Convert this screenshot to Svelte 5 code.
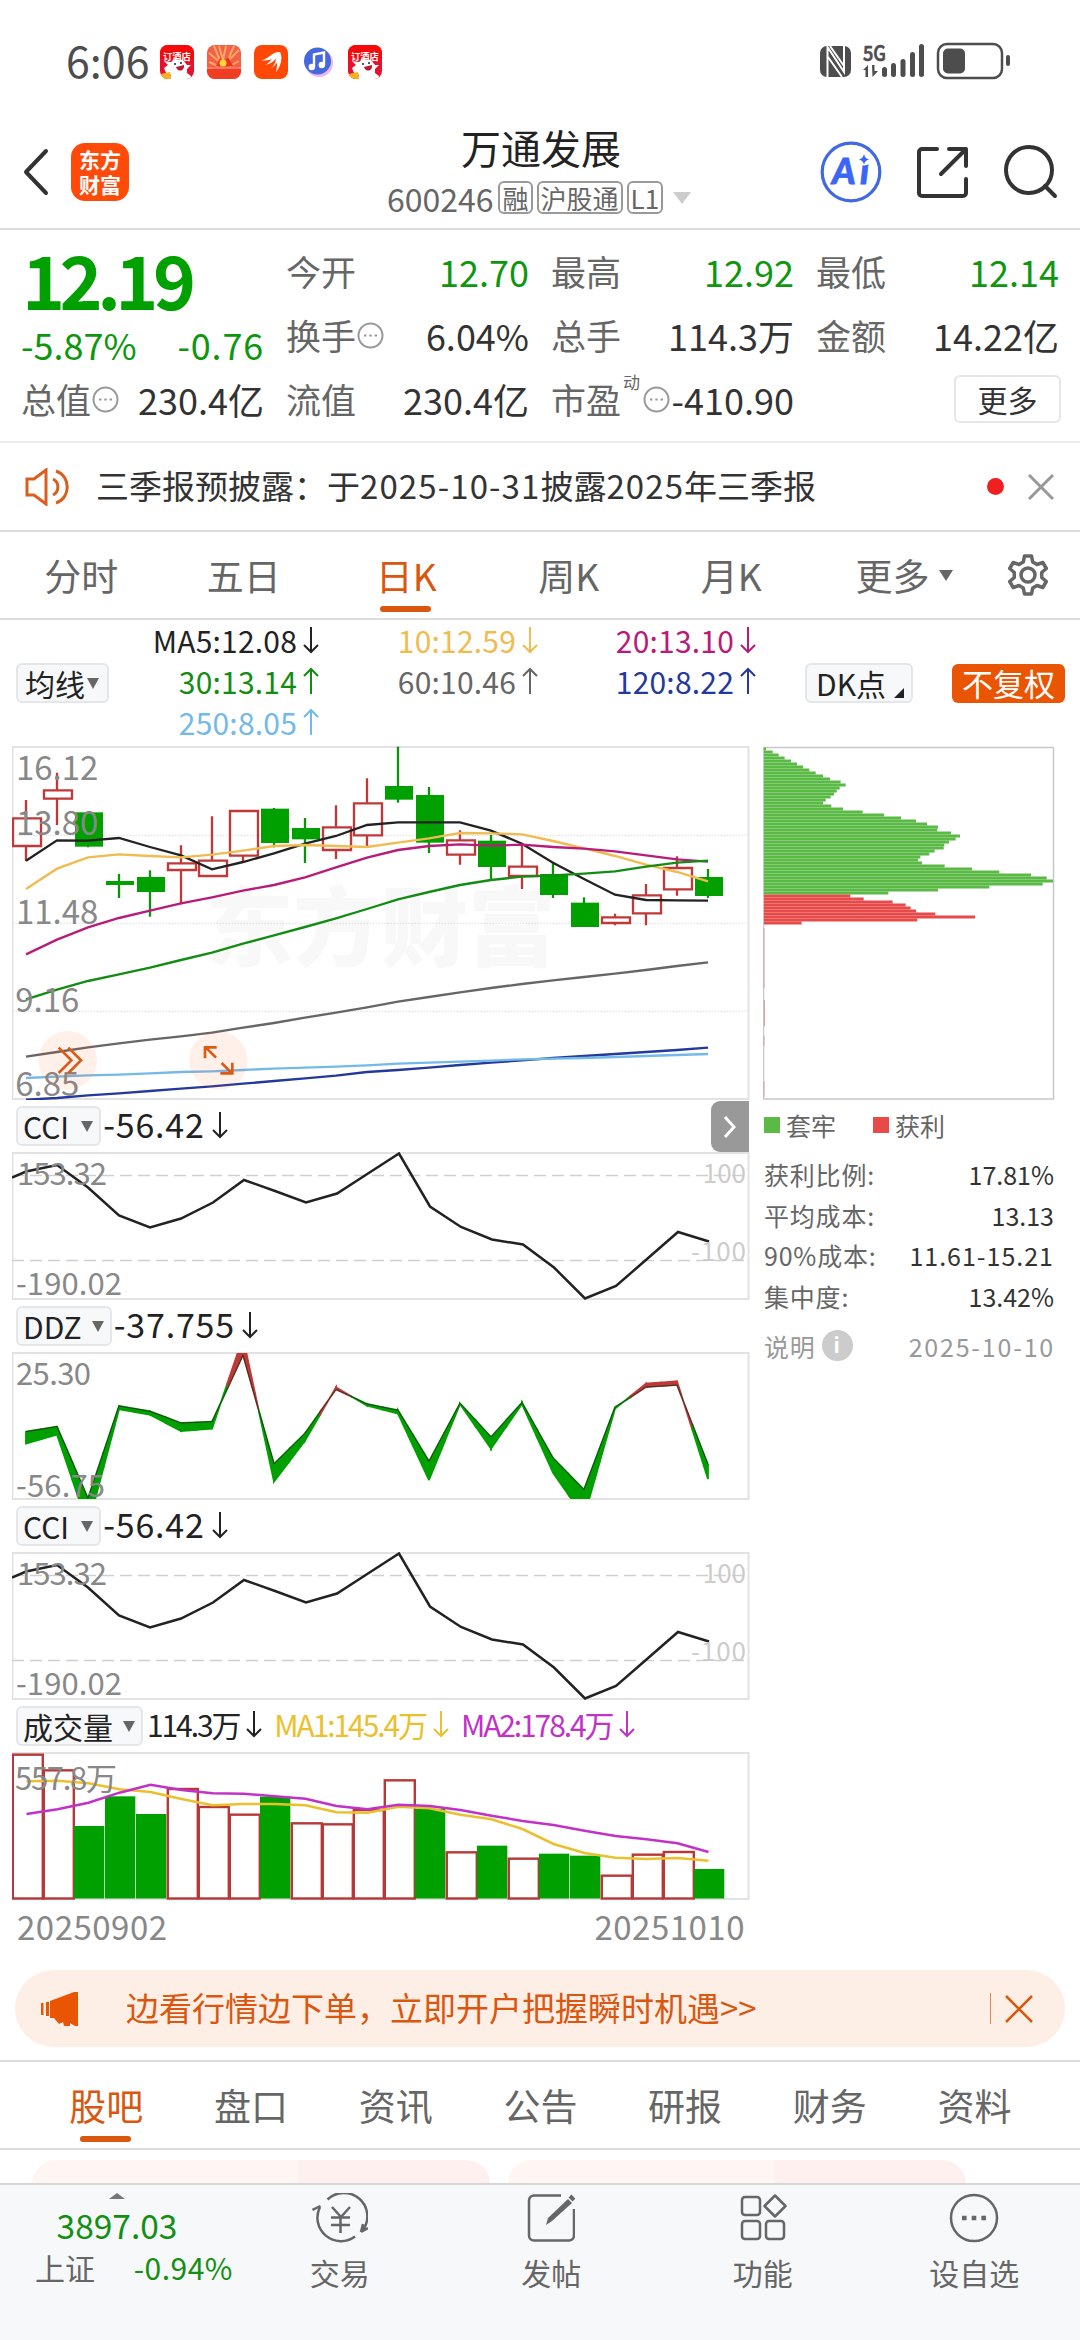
<script lang="ts">
	type Quote = { label: string; value: string; tone?: string; info?: boolean; sup?: string };

	// Header quote grid, one array per column
	const columns: Quote[][] = [
		[
			{ label: '今开', value: '12.70', tone: 'down' },
			{ label: '换手', value: '6.04%', info: true },
			{ label: '流值', value: '230.4亿' }
		],
		[
			{ label: '最高', value: '12.92', tone: 'down' },
			{ label: '总手', value: '114.3万' },
			{ label: '市盈', value: '-410.90', info: true, sup: '动' }
		],
		[
			{ label: '最低', value: '12.14', tone: 'down' },
			{ label: '金额', value: '14.22亿' }
		]
	];

	const periods = ['分时', '五日', '日K', '周K', '月K'];

	const averages = [
		{ text: 'MA5:12.08', dir: 'down', color: '#222' },
		{ text: '10:12.59', dir: 'down', color: '#f0bb50' },
		{ text: '20:13.10', dir: 'down', color: '#b81c78' },
		{ text: '30:13.14', dir: 'up', color: '#148c14' },
		{ text: '60:10.46', dir: 'up', color: '#666' },
		{ text: '120:8.22', dir: 'up', color: '#24399b' },
		{ text: '250:8.05', dir: 'up', color: '#74b9e8' }
	];

	// Candles: [up, high, bodyTop, bodyBottom, low], in thirds of a pixel
	const candles: [number, number, number, number, number][] = [
		[1, 210, 263, 348, 393],
		[1, 128, 179, 206, 285],
		[0, 247, 247, 350, 352],
		[0, 432, 453, 465, 504],
		[0, 421, 441, 486, 560],
		[1, 346, 398, 420, 523],
		[1, 259, 390, 438, 438],
		[1, 241, 241, 377, 398],
		[0, 234, 236, 339, 352],
		[0, 264, 294, 328, 399],
		[1, 226, 290, 360, 387],
		[1, 145, 218, 316, 348],
		[0, 50, 168, 209, 218],
		[0, 171, 195, 338, 369],
		[1, 301, 329, 374, 404],
		[0, 315, 332, 411, 450],
		[1, 345, 408, 438, 477],
		[0, 397, 432, 495, 504],
		[0, 502, 518, 591, 591],
		[1, 551, 560, 579, 586],
		[1, 462, 494, 550, 586],
		[1, 379, 412, 478, 497],
		[0, 417, 441, 498, 504]
	];

	const maLines = [
		{ color: '#666', ys: [980, 966, 952, 940, 929, 919, 908, 893, 879, 863, 848, 832, 815, 801, 787, 774, 762, 751, 741, 731, 720, 708, 697] },
		{ color: '#24399b', ys: [1109, 1104, 1096, 1090, 1083, 1076, 1069, 1061, 1053, 1045, 1037, 1026, 1020, 1013, 1005, 998, 991, 984, 978, 972, 966, 960, 953] },
		{ color: '#74b9e8', ys: [1044, 1040, 1036, 1034, 1030, 1026, 1024, 1020, 1016, 1013, 1010, 1006, 1001, 998, 995, 992, 988, 986, 984, 981, 978, 975, 972] },
		{ color: '#222', ys: [392, 331, 332, 324, 351, 376, 418, 396, 370, 341, 318, 285, 277, 277, 277, 302, 341, 398, 447, 494, 510, 511, 512] },
		{ color: '#f0bb50', ys: [477, 416, 382, 373, 378, 382, 374, 362, 348, 345, 348, 351, 338, 325, 309, 310, 313, 333, 355, 378, 404, 426, 454] },
		{ color: '#b81c78', ys: [673, 629, 592, 564, 542, 520, 502, 482, 465, 442, 412, 383, 360, 348, 343, 347, 344, 351, 356, 364, 376, 388, 395] },
		{ color: '#148c14', ys: [808, 779, 753, 733, 713, 690, 668, 641, 616, 591, 565, 537, 508, 486, 465, 450, 440, 436, 431, 424, 410, 398, 392] }
	];

	const cci = [19.5, 13, 35.5, 63.5, 75.5, 66.5, 50.5, 28, 39, 50.5, 41.5, 21.5, 1.5, 54.5, 75, 87.5, 92.5, 115.5, 146.5, 134, 107, 80, 89.5];

	// DDZ: [line, band edge], the band is red where its edge is above the line
	const ddz: [number, number][] = [
		[995, 1031], [980, 1004], [1195, 1278], [918, 928], [934, 944], [969, 993], [965, 986], [765, 712],
		[1092, 1145], [1000, 1022], [868, 862], [912, 917], [931, 941], [1084, 1140], [910, 912], [1011, 1046],
		[908, 912], [1074, 1118], [1169, 1251], [922, 926], [861, 851], [855, 844], [1094, 1137]
	];

	// Volume bars: [up, top]
	const volumes: [number, number][] = [
		[1, 731], [1, 778], [0, 948], [0, 859], [0, 912], [1, 834], [1, 888], [1, 911], [0, 860], [1, 937], [1, 940], [1, 897],
		[1, 808], [0, 897], [1, 1024], [0, 1007], [1, 1043], [0, 1031], [0, 1037], [1, 1094], [1, 1031], [1, 1023], [0, 1077]
	];
	const volMa = [
		{ color: '#eac12c', ys: [814, 812, 820, 838, 846, 867, 886, 882, 882, 886, 907, 908, 890, 895, 914, 928, 957, 1002, 1029, 1043, 1047, 1044, 1052] },
		{ color: '#c032c8', ys: [912, 898, 878, 848, 824, 840, 850, 851, 859, 866, 888, 898, 884, 888, 900, 917, 933, 945, 962, 978, 988, 1000, 1026] }
	];

	const trapped = [
		78, 98, 116, 134, 153, 171, 189, 208, 227, 249, 270, 302, 317, 299, 290, 282, 272, 257, 249, 274, 309, 368, 432, 483, 528,
		561, 594, 592, 633, 660, 647, 627, 613, 611, 584, 568, 541, 534, 546, 614, 696, 778, 873, 920, 939, 908, 748, 594, 445
	];
	const profit = [331, 371, 458, 497, 512, 528, 586, 705, 532, 185];

	const stats = [
		['获利比例:', '17.81%'],
		['平均成本:', '13.13'],
		['90%成本:', '11.61-15.21'],
		['集中度:', '13.42%']
	];

	const sections = ['股吧', '盘口', '资讯', '公告', '研报', '财务', '资料'];

	const px = (i: number) => 14 + 31 * i;
	const volY = (y: number) => y / 3 - 242;
	const ddzY = (y: number) => y / 3 - 252;

	const priceLine = (ys: number[]) => ys.map((y, i) => `${78 + 93 * i},${y}`).join(' ');
	const volLine = (ys: number[]) => ys.map((y, i) => `${px(i) + 0.5},${volY(y)}`).join(' ');
	const cciLine = `0,25.5 ` + cci.map((y, i) => `${px(i) + (i > 5 ? 1 : 0)},${y}`).join(' ');
	const ddzLine = ddz.map(([y], i) => `${px(i)},${ddzY(y)}`).join(' ');

	// Each segment is split in the middle so that both halves take the colour of their own day
	const ddzBands = ddz.slice(1).flatMap(([y1, e1], k) => {
		const [y0, e0] = ddz[k];
		const x0 = px(k);
		const x1 = px(k + 1);
		const xm = (x0 + x1) / 2;
		const m = ddzY((y0 + y1) / 2);
		const em = ddzY((e0 + e1) / 2);
		return [
			{ up: e0 < y0, points: `${x0},${ddzY(y0)} ${xm},${m} ${xm},${em} ${x0},${ddzY(e0)}` },
			{ up: e1 < y1, points: `${xm},${m} ${x1},${ddzY(y1)} ${x1},${ddzY(e1)} ${xm},${em}` }
		];
	});
</script>

{#snippet arrow(dir: string)}
	<svg class="arrow" width="18" height="28" viewBox="0 0 18 28">
		<path d={dir === 'up' ? 'M9 27V2M2 9l7-7 7 7' : 'M9 1v25M2 19l7 7 7-7'} />
	</svg>
{/snippet}

{#snippet info()}
	<svg class="info" width="27" height="27" viewBox="0 0 27 27">
		<circle cx="13.5" cy="13.5" r="12" />
		<path d="M7 13.5h2.4M12.3 13.5h2.4M17.6 13.5h2.4" />
	</svg>
{/snippet}

{#snippet dogIcon()}
	<svg width="34" height="34" viewBox="0 0 34 34">
		<defs><clipPath id="dog"><rect width="34" height="34" rx="8" /></clipPath></defs>
		<g clip-path="url(#dog)">
			<rect width="34" height="34" fill="#e8102a" />
			<rect width="34" height="14" fill="#f80808" />
			<text x="3" y="14.5" font-size="9.3" font-weight="700" fill="#fff">订酒店</text>
			<path d="M4 16l7 1 4-3 8 1 4 5 4 0-4 4v4l4 3v4H9l2-5-5-2-2-5 4-3z" fill="#fff" />
			<path d="M16 22l8-2c1 6-6 8-8 2z" fill="#c01830" />
			<circle cx="15" cy="19" r="1" fill="#222" />
			<circle cx="21" cy="18" r="1" fill="#222" />
			<path d="M1 29l9-2 1 7H2z" fill="#f8b020" />
		</g>
	</svg>
{/snippet}

{#snippet cciPanel()}
	<div class="indicator-head">
		<button class="chip">CCI <i class="caret"></i></button>
		<span>-56.42</span>{@render arrow('down')}
	</div>
	<svg class="panel" width="738" height="148" viewBox="0 0 738 148">
		<rect class="frame" x="0.5" y="1" width="736" height="146" />
		<path class="dashed" d="M0 23.5H736M0 108.5H736" />
		<polyline class="line" points={cciLine} />
		<text class="axis" x="5" y="33" textLength="90">153.32</text>
		<text class="axis" x="4" y="143" textLength="106">-190.02</text>
		<text class="limit" x="734" y="30.5" text-anchor="end">100</text>
		<text class="limit" x="679" y="108.5" textLength="55">-100</text>
	</svg>
{/snippet}

<main class="screen">
	<div class="status">
		<span class="time">6:06</span>
		<div class="apps">
			{@render dogIcon()}
			<svg width="34" height="34" viewBox="0 0 34 34">
				<rect width="34" height="34" rx="8" fill="#f4604a" />
				<path d="M2 8l12 10L7 1M12 1l4 14 3-14M32 5L20 17 27 1M2 17l9 4M32 16l-9 5" stroke="#fba860" stroke-width="2" fill="none" />
				<path d="M9 21l4-8 4 4 4-5 5 9z" fill="#f23020" />
				<circle cx="16" cy="18" r="3.5" fill="#ffd838" />
				<path d="M0 22h34v4a8 8 0 0 1-8 8H8a8 8 0 0 1-8-8z" fill="#f03c20" />
				<path d="M0 22h34v2H0z" fill="#fa7a60" />
			</svg>
			<svg width="34" height="34" viewBox="0 0 34 34">
				<rect width="34" height="34" rx="8" fill="#ff4806" />
				<path d="M7 15.500C15 14 17 7 26 7c-4 2-4 9-19 8.500zM11 20C18 17 19 9 26 7c-2 5-7 12-15 13zM17 23c6-4 4-12 9-16 1 5-3 13-9 16zM22 27c2-7 0-14 4-20 3 6 1 14-4 20z" fill="#fff" />
			</svg>
			<svg width="34" height="34" viewBox="0 0 34 34">
				<circle cx="18" cy="18" r="14" fill="#e6b8f4" />
				<circle cx="16.500" cy="16" r="13.500" fill="#4668dc" />
				<path d="M13 22V9.500l10-2V20" fill="none" stroke="#fff" stroke-width="2.400" />
				<circle cx="10.800" cy="22" r="3.200" fill="#fff" />
				<circle cx="20.800" cy="20" r="3.200" fill="#fff" />
			</svg>
			{@render dogIcon()}
		</div>
		<svg class="signals" width="192" height="38" viewBox="0 0 192 38" fill="#4d4d4d">
			<rect y="4" width="31" height="31" rx="7" />
			<path d="M7.500 35V5L24 30V4" fill="none" stroke="#fff" stroke-width="2" />
			<path d="M10 4L24 24M8 15l14 20" fill="none" stroke="#fff" stroke-width="2" />
			<text x="43" y="18.500" font-size="21" font-weight="500" stroke="#4d4d4d" stroke-width="0.700" textLength="23" lengthAdjust="spacingAndGlyphs">5G</text>
			<path d="M43 28l5-5v12h-2.500v-7zM52 23h2.500v6l3.500 0-5.500 6z" />
			<rect x="62" y="25" width="5" height="10" rx="2.500" />
			<rect x="71" y="21" width="5" height="14" rx="2.500" />
			<rect x="80.500" y="17" width="5" height="18" rx="2.500" />
			<rect x="90" y="10" width="5" height="25" rx="2.500" />
			<rect x="99" y="2" width="5" height="33" rx="2.500" />
			<rect x="118" y="2" width="64" height="34" rx="9" fill="none" stroke="#4d4d4d" stroke-width="2.500" />
			<rect x="123" y="6.500" width="22" height="25" rx="5" />
			<rect x="186" y="13" width="4" height="11" rx="2" />
		</svg>
	</div>

	<header class="header">
		<svg class="back" width="30" height="50" viewBox="0 0 30 50"><path d="M25 4L5 25l20 21" /></svg>
		<div class="logo"><span>东方</span><span>财富</span></div>
		<div class="title">
			<h1>万通发展</h1>
			<div class="code">
				<span class="number">600246</span>
				<span class="badge">融</span>
				<span class="badge">沪股通</span>
				<span class="badge">L1</span>
				<i class="caret pale"></i>
			</div>
		</div>
		<div class="tools">
			<svg width="62" height="62" viewBox="0 0 62 62">
				<circle cx="31" cy="31" r="28.800" fill="none" stroke="#4169e1" stroke-width="3.200" />
				<text class="ai" x="12" y="43" textLength="37">Ai</text>
				<circle cx="44" cy="17.500" r="7" fill="#fff" />
				<path d="M44 13c1 3.500 2 4.500 5 5.500-3 1-4 2-5 5-1-3-2-4-5-5 3-1 4-2 5-5.500z" fill="#3b66f5" />
			</svg>
			<svg class="stroke-icon" width="52" height="52" viewBox="0 0 52 52">
				<path d="M20 3H5a3 3 0 0 0-3 3v41a3 3 0 0 0 3 3h41a3 3 0 0 0 3-3V33M32 3h17v17M48 4L24 28" />
			</svg>
			<svg class="stroke-icon" width="54" height="54" viewBox="0 0 54 54">
				<circle cx="25" cy="25" r="23" />
				<path d="M41 41l10 10" />
			</svg>
		</div>
	</header>

	<section class="quote">
		<div class="quote-main">
			<strong>12.19</strong>
			<div class="pair down"><span>-5.87%</span><span class="change">-0.76</span></div>
			<div class="pair">
				<span class="label">总值{@render info()}</span>
				<span>230.4亿</span>
			</div>
		</div>
		{#each columns as column}
			<div class="quote-col">
				{#each column as item}
					<div class="pair">
						<span class="label">
							{item.label}{#if item.sup}<sup>{item.sup}</sup>{/if}{#if item.info}{@render info()}{/if}
						</span>
						<span class={item.tone}>{item.value}</span>
					</div>
				{/each}
				{#if column.length < 3}
					<div class="pair end"><button class="more">更多</button></div>
				{/if}
			</div>
		{/each}
	</section>

	<section class="notice">
		<svg width="46" height="38" viewBox="0 0 46 38">
			<path d="M2 11h7l12-9v34l-12-9H2zM28 11a9 9 0 0 1 0 16M31 3c15 5 15 27 0 32" />
		</svg>
		<p>三季报预披露：于<span class="wide">2025-10-31</span>披露<span class="wide">2025</span>年三季报</p>
		<i class="dot"></i>
		<svg class="close" width="26" height="26" viewBox="0 0 26 26"><path d="M1 1l24 24M25 1L1 25" /></svg>
	</section>

	<nav class="periods">
		{#each periods as period}
			<span class:active={period === '日K'}>{period}</span>
		{/each}
		<span class="periods-more">更多<i class="caret"></i></span>
		<svg width="46" height="46" viewBox="0 0 46 46">
			<path d="M19.500 2h7l1.200 6 4.300 2.500 5.800-2 3.500 6-4.600 4v5l4.600 4-3.500 6-5.800-2-4.300 2.500-1.200 6h-7l-1.200-6-4.300-2.500-5.800 2-3.500-6 4.600-4v-5l-4.600-4 3.500-6 5.800 2 4.300-2.500z" />
			<circle cx="23" cy="21" r="7" />
		</svg>
	</nav>

	<div class="ma-bar">
		<button class="chip">均线<i class="caret"></i></button>
		<div class="ma-list">
			{#each averages as ma}
				<span style="color: {ma.color}">{ma.text}{@render arrow(ma.dir)}</span>
			{/each}
		</div>
		<button class="chip dk">DK点<i class="corner"></i></button>
		<button class="adjust">不复权</button>
	</div>

	<div class="charts">
		<div class="left">
			<svg class="price" width="738" height="354" viewBox="36 48 2214 1062">
				<rect class="frame" x="37.500" y="51" width="2208" height="1056" />
				<text class="watermark" x="618" y="690">东方财富</text>
				<path class="dotted" d="M38 316H2244M38 580H2244M38 844H2244" />
				{#each candles as [up, high, top, bottom, low], i}
					{@const x = 78 + 93 * i}
					{#if up}
						<path class="rise" d="M{x} {high}V{top}M{x} {bottom}V{low}M{x - 39} {top + 2}h84V{bottom}h-84z" />
					{:else}
						<path class="fall" d="M{x} {high}V{low}" />
						<rect class="fall-body" x={x - 39} y={top} width="84" height={bottom - top} />
					{/if}
				{/each}
				{#each maLines as line}
					<polyline points={priceLine(line.ys)} stroke={line.color} />
				{/each}
				<g class="axis-labels">
					<text x="48" y="150" textLength="247">16.12</text>
					<text x="48" y="315" textLength="247">13.80</text>
					<text x="48" y="582" textLength="247">11.48</text>
					<text x="46" y="846" textLength="192">9.16</text>
					<text x="46" y="1098" textLength="192">6.85</text>
				</g>
				<circle class="bubble" cx="203" cy="991" r="88" />
				<circle class="bubble" cx="655" cy="991" r="88" />
				<path class="bubble-icon" d="M176 953l38 38-38 38M205 953l38 38-38 38M648 983l-31-31M615 985V952h35M665 999l31 31M697 998v32h-36" />
			</svg>

			<div class="with-toggle">
				{@render cciPanel()}
				<button class="toggle" aria-label="收起">
					<svg width="14" height="24" viewBox="0 0 14 24"><path d="M2 2l9 10-9 10" /></svg>
				</button>
			</div>

			<div class="indicator-head">
				<button class="chip ddz">DDZ <i class="caret"></i></button>
				<span>-37.755</span>{@render arrow('down')}
			</div>
			<svg class="panel" width="738" height="148" viewBox="0 0 738 148">
				<rect class="frame" x="0.5" y="1" width="736" height="146" />
				<svg width="738" height="146" viewBox="0 1 738 146" y="1">
					{#each ddzBands as band}
						<polygon class:up={band.up} class="band" points={band.points} />
					{/each}
					<polyline class="thin" points={ddzLine} />
				</svg>
				<text class="axis" x="4" y="33" textLength="75">25.30</text>
				<text class="axis" x="4" y="145" textLength="89">-56.75</text>
			</svg>

			{@render cciPanel()}

			<div class="indicator-head volume-head">
				<button class="chip">成交量 <i class="caret"></i></button>
				<span class="vol">114.3万{@render arrow('down')}</span>
				<span class="vol vol-ma1">MA1:145.4万{@render arrow('down')}</span>
				<span class="vol vol-ma2">MA2:178.4万{@render arrow('down')}</span>
			</div>
			<svg class="panel" width="738" height="148" viewBox="0 0 738 148">
				<rect class="frame" x="0.5" y="1" width="736" height="146" />
				{#each volumes as [up, top], i}
					{#if up}
						<rect class="vol-up" x={31 * i + 0.800} y={volY(top) + 1} width="30" height={145.500 - volY(top)} />
					{:else}
						<rect class="fall-body" x={31 * i} y={volY(top)} width="30.300" height={146.500 - volY(top)} />
					{/if}
				{/each}
				{#each volMa as line}
					<polyline class="line" points={volLine(line.ys)} style="stroke: {line.color}" />
				{/each}
				<text class="axis" x="3" y="38" textLength="102">557.8万</text>
			</svg>
			<div class="dates"><span>20250902</span><span>20251010</span></div>
		</div>

		<aside class="right">
			<svg class="distribution" width="292" height="354" viewBox="0 0 292 354">
				<rect x="0.5" y="1.500" width="290" height="351.500" />
				{#each trapped as value, i}
					<path class="trapped" d="M1 {3 + i * 3}H{(value - 72) / 3 + 1}" />
				{/each}
				{#each profit as value, i}
					<path class="profit" d="M1 {150 + i * 3}H{(value - 72) / 3 + 1}" />
				{/each}
				<path class="tail" d="M1 182v60M1.500 254v26M1 290v10M1 335v16" />
			</svg>
			<div class="legend">
				<span><i class="trapped-key"></i>套牢</span>
				<span><i class="profit-key"></i>获利</span>
			</div>
			{#each stats as [name, value]}
				<div class="stat"><span>{name}</span><b class:range={value.includes('-')}>{value}</b></div>
			{/each}
			<div class="stat explain">
				<span>说明<i>i</i></span>
				<span class="date">2025-10-10</span>
			</div>
		</aside>
	</div>

	<section class="banner">
		<svg width="40" height="34" viewBox="0 0 40 34">
			<path d="M1 11h2.500v12H1zM6 10h3v14H6zM10 9L34 0h4v34h-3l-5-3v3h-6l-1-4-4 2-5-6h-4z" />
		</svg>
		<p>边看行情边下单，立即开户把握瞬时机遇&gt;&gt;</p>
		<i class="divider"></i>
		<svg class="close" width="28" height="28" viewBox="0 0 28 28"><path d="M1 1l26 26M27 1L1 27" /></svg>
	</section>

	<nav class="sections">
		{#each sections as section, i}
			<span class:active={i === 0}>{section}</span>
		{/each}
	</nav>

	<div class="cards">
		<div class="card"></div>
		<div class="card"></div>
	</div>

	<footer class="bottom">
		<div class="index">
			<i class="up-caret"></i>
			<span class="points">3897.03</span>
			<div><span>上证</span><span class="rate">-0.94%</span></div>
		</div>
		<div class="action">
			<svg width="56" height="50" viewBox="0 0 56 50">
				<path d="M15.500 6.500A23.500 23.500 0 0 1 51 37M49 39l7-4M49 39l2-8M43 43.500A23.500 23.500 0 0 1 8 14M0.500 17l8-4M20 14l9 10 9-10M19 24.500h19M19 32h19M28.500 24v16" />
			</svg>
			<span>交易</span>
		</div>
		<div class="action">
			<svg width="48" height="50" viewBox="0 0 48 50">
				<path d="M34 2.500H7a5 5 0 0 0-5 5v35a5 5 0 0 0 5 5h35a5 5 0 0 0 5-5V16" />
				<path d="M19 32l2-7L41 6l4 4-20 18z" fill="#666" stroke="none" />
				<path d="M43 3l4 4" stroke-width="4" />
			</svg>
			<span>发帖</span>
		</div>
		<div class="action">
			<svg width="48" height="50" viewBox="0 0 48 50">
				<rect x="3" y="4" width="18" height="18" rx="3" />
				<path d="M36 2.500l10.500 10.500L36 23.500 25.500 13z" stroke-linejoin="round" />
				<rect x="3" y="28" width="18" height="18" rx="3" />
				<rect x="27" y="28" width="18" height="18" rx="3" />
			</svg>
			<span>功能</span>
		</div>
		<div class="action">
			<svg width="50" height="50" viewBox="0 0 50 50">
				<circle cx="25" cy="25" r="23" />
				<path d="M13 25h4.600M22.700 25h4.600M32.400 25h4.600" stroke-width="4.600" />
			</svg>
			<span>设自选</span>
		</div>
	</footer>
</main>

<style>
	:global(body) {
		background: #fff;
		overflow: hidden;
	}

	.screen {
		width: 1080px;
		height: 2340px;
		display: flex;
		flex-direction: column;
		font-family: 'Noto Sans CJK SC', Roboto, sans-serif;
		color: #333;
		background: #fff;
		overflow: hidden;
	}

	.screen > * {
		flex-shrink: 0;
		box-sizing: border-box;
	}

	svg {
		flex-shrink: 0;
		display: block;
	}

	button {
		font: inherit;
		margin: 0;
		padding: 0;
		box-sizing: border-box;
		white-space: nowrap;
	}

	p,
	h1 {
		margin: 0;
		font-weight: 400;
	}

	span {
		white-space: nowrap;
	}

	.caret {
		width: 0;
		height: 0;
		border: 7px solid transparent;
		border-top: 11px solid #666;
		border-bottom: 0;
	}

	.down {
		color: #0f960f;
	}

	.arrow {
		fill: none;
		stroke: currentColor;
		stroke-width: 2;
	}

	/* --- STATUS BAR --- */
	.status {
		height: 112px;
		padding: 11px 68px 0 66px;
		display: flex;
		align-items: center;
	}

	.time {
		font-size: 43px;
		color: #4d4d4d;
		width: 94px;
		line-height: 50px;
		margin-top: -6px;
	}

	.apps {
		display: flex;
		gap: 13px;
	}

	.signals {
		margin-left: auto;
		margin-top: -2px;
	}

	/* --- HEADER --- */
	.header {
		height: 118px;
		border-bottom: 2px solid #dcdcdc;
		display: flex;
		align-items: center;
		padding: 3px 22px 0 21px;
	}

	.back path,
	.stroke-icon {
		fill: none;
		stroke: #333;
		stroke-width: 4;
		stroke-linecap: round;
		stroke-linejoin: round;
	}

	.logo {
		width: 58px;
		height: 58px;
		margin-left: 20px;
		border-radius: 14px;
		background: #ff4a0a;
		color: #fff;
		font-size: 21px;
		font-weight: 700;
		line-height: 25px;
		display: flex;
		flex-direction: column;
		align-items: center;
		justify-content: center;
	}

	.title {
		flex: 1;
		display: flex;
		flex-direction: column;
		align-items: center;
		padding-left: 133px;
	}

	.title h1 {
		font-size: 40px;
		line-height: 50px;
		color: #222;
	}

	.code {
		display: flex;
		align-items: center;
		gap: 4px;
		color: #666;
		font-size: 32px;
		height: 47px;
		padding-top: 2px;
		margin-left: -4px;
	}

	.code .number {
		margin-right: 1px;
	}

	.badge {
		border: 2px solid #999;
		border-radius: 6px;
		font-size: 26px;
		line-height: 29px;
		padding: 0 2px;
	}

	.caret.pale {
		margin-left: 6px;
		border-width: 12px 9px 0;
		border-color: #ccc transparent transparent;
	}

	.tools {
		display: flex;
		align-items: center;
		gap: 35px;
	}

	.ai {
		font: italic 900 36px Lato, sans-serif;
		fill: #3b66f5;
		stroke: #3b66f5;
		stroke-width: 0.8;
	}

	/* --- QUOTE --- */
	.quote {
		height: 213px;
		border-bottom: 2px solid #ebebeb;
		padding: 9px 20px 0 21px;
		display: flex;
		gap: 22px;
		font-size: 36px;
	}

	.quote-main,
	.quote-col {
		width: 243px;
		display: flex;
		flex-direction: column;
	}

	.quote-main strong {
		color: #00a000;
		font-size: 73px;
		line-height: 78px;
		height: 82px;
		letter-spacing: -5.5px;
		margin-left: 1px;
	}

	.quote-main .down {
		height: 46px;
	}

	.change {
		letter-spacing: 0.8px;
	}

	.pair {
		height: 64px;
		line-height: 64px;
		display: flex;
		justify-content: space-between;
		align-items: center;
	}

	.pair.end {
		justify-content: flex-end;
	}

	.label {
		color: #666;
		font-size: 35px;
		display: flex;
		align-items: center;
	}

	.label sup {
		font-size: 17px;
		line-height: 20px;
		margin: -34px 2px 0;
	}

	.info {
		fill: none;
		stroke: #999;
		stroke-width: 2;
		margin-left: 1px;
	}

	.more {
		width: 107px;
		height: 48px;
		margin-right: -2px;
		border: 2px solid #e6e6e6;
		border-radius: 6px;
		background: #fff;
		color: #333;
		font-size: 30px;
		line-height: 42px;
	}

	/* --- NOTICE --- */
	.notice {
		height: 89px;
		border-bottom: 2px solid #dcdcdc;
		display: flex;
		align-items: center;
		padding: 0 26px 0 25px;
		font-size: 33px;
	}

	.notice p {
		margin: -3px 0 0 25px;
		flex: 1;
		white-space: nowrap;
	}

	.wide {
		letter-spacing: 1.1px;
	}

	.notice svg {
		fill: none;
		stroke: #d95f1e;
		stroke-width: 3;
	}

	.notice .dot {
		width: 17px;
		height: 17px;
		border-radius: 50%;
		background: #f02020;
		margin-right: 24px;
	}

	.notice .close {
		stroke: #999;
	}

	/* --- PERIOD TABS --- */
	.periods {
		height: 88px;
		border-bottom: 2px solid #dcdcdc;
		display: flex;
		align-items: center;
		font-size: 37px;
		color: #666;
	}

	.periods > span {
		width: 162.5px;
		text-align: center;
		height: 86px;
		line-height: 86px;
		position: relative;
	}

	.active {
		color: #d9570f;
	}

	.active::after {
		content: '';
		position: absolute;
		left: 50%;
		bottom: 6px;
		width: 51px;
		height: 6px;
		margin-left: -26px;
		border-radius: 3px;
		background: #d9570f;
	}

	.periods .periods-more {
		width: 96px;
		margin-left: 43px;
		display: flex;
		align-items: center;
		gap: 9px;
	}

	.periods svg {
		margin: 4px 0 0 53px;
		fill: none;
		stroke: #666;
		stroke-width: 3.5;
		stroke-linejoin: round;
	}

	/* --- MOVING AVERAGES --- */
	.ma-bar {
		height: 126px;
		padding: 0 16px;
		display: flex;
		align-items: center;
		font-size: 30px;
	}

	.chip {
		height: 40px;
		border: 2px solid #e4e6e9;
		border-radius: 6px;
		background: #f7f8fa;
		color: #222;
		font-size: 30px;
		line-height: 34px;
		display: flex;
		align-items: center;
		padding: 0 7px;
	}

	.ma-bar > .chip {
		width: 93px;
	}

	.ma-bar > .chip .caret {
		border-width: 11px 6px 0;
		margin-left: 2px;
	}

	.ma-list {
		width: 648px;
		display: grid;
		grid-template-columns: 211px 219px 218px;
		grid-auto-rows: 41px;
		justify-items: end;
		margin-top: -4px;
		letter-spacing: 0.2px;
	}

	.ma-list span {
		display: flex;
		align-items: center;
		gap: 5px;
	}

	.ma-bar > .dk {
		margin-left: 48px;
		width: 108px;
		padding: 0 0 0 9px;
	}

	.corner {
		border: 5px solid #222;
		border-top-color: transparent;
		border-left-color: transparent;
		margin: 20px 0 0 8px;
	}

	.adjust {
		margin-left: auto;
		margin-right: -1px;
		width: 113px;
		height: 39px;
		border: 0;
		border-radius: 6px;
		background: #ea5504;
		color: #fff;
		font-size: 31px;
		line-height: 38px;
	}

	/* --- CHARTS --- */
	.charts {
		display: flex;
		padding-left: 12px;
		gap: 13px;
		height: 1224px;
	}

	.left {
		width: 738px;
	}

	.frame {
		fill: none;
		stroke: #e2e2e2;
		stroke-width: 2;
	}

	.price {
		fill: none;
		stroke-width: 7;
	}

	.price .frame {
		stroke-width: 6;
	}

	.watermark {
		font-size: 262px;
		font-weight: 900;
		fill: #f8f8f8;
	}

	.dotted {
		stroke: #ccc;
		stroke-width: 3;
		stroke-dasharray: 3 6;
	}

	.rise {
		stroke: #c03838;
	}

	.fall {
		stroke: #109010;
	}

	.fall-body {
		fill: #00a000;
	}

	.axis-labels {
		fill: #888;
		font-size: 99px;
	}

	.bubble {
		fill: #ff6414;
		fill-opacity: 0.09;
	}

	.bubble-icon {
		stroke: #dc5a14;
		stroke-width: 8;
	}

	.with-toggle {
		position: relative;
	}

	.toggle {
		position: absolute;
		right: 1px;
		top: 1px;
		width: 38px;
		height: 51px;
		border: 0;
		border-radius: 9px 0 0 9px;
		background: #999;
		display: flex;
		align-items: center;
		justify-content: center;
	}

	.toggle svg {
		fill: none;
		stroke: #fff;
		stroke-width: 3;
	}

	.indicator-head {
		height: 52px;
		display: flex;
		align-items: center;
		padding-left: 4px;
		font-size: 34px;
		line-height: 46px;
		color: #222;
	}

	.indicator-head .chip {
		gap: 12px;
		margin-right: 2px;
		padding: 0 6px 0 5px;
	}

	.indicator-head .ddz {
		gap: 10px;
	}

	.indicator-head > span {
		margin-top: -4px;
		letter-spacing: 0.8px;
	}

	.indicator-head .caret {
		border-width: 11px 6px 0;
	}

	.indicator-head > .arrow {
		margin: -2px 0 0 6px;
	}

	.volume-head .chip {
		gap: 10px;
		margin-right: 4px;
	}

	.indicator-head > .vol {
		display: flex;
		align-items: center;
		gap: 6px;
		margin-right: 11px;
		font-size: 30px;
		letter-spacing: -2.1px;
	}

	.vol-ma1 {
		color: #eac12c;
	}

	.vol-ma2 {
		color: #c032c8;
	}

	.dashed {
		stroke: #d0d0d0;
		stroke-width: 1.5;
		stroke-dasharray: 12 6;
	}

	.line,
	.thin {
		fill: none;
		stroke: #222;
		stroke-width: 2.5;
	}

	.thin {
		stroke: #2a3a2a;
		stroke-width: 1;
	}

	.axis {
		fill: #888;
		font-size: 31px;
	}

	.limit {
		fill: #ccc;
		font-size: 26px;
	}

	.band {
		fill: #00a000;
		stroke: #00a000;
		stroke-width: 1.8;
	}

	.band.up {
		fill: #c03838;
		stroke: #c03838;
	}

	.vol-up {
		fill: #fff;
		stroke: #b83838;
		stroke-width: 2.4;
	}

	.dates {
		display: flex;
		justify-content: space-between;
		padding: 0 5px;
		font-size: 33px;
		line-height: 53px;
		letter-spacing: 0.5px;
		color: #888;
	}

	/* --- CHIP DISTRIBUTION --- */
	.right {
		width: 292px;
		color: #666;
		font-size: 25px;
	}

	.distribution rect {
		fill: none;
		stroke: #c8c8c8;
		stroke-width: 1.5;
	}

	.trapped,
	.profit {
		stroke: #5bb946;
		stroke-width: 2.9;
	}

	.profit {
		stroke: #e84a4a;
	}

	.tail {
		stroke: #d8a0a0;
		stroke-width: 1;
	}

	.legend {
		height: 54px;
		padding: 0 0 5px 1px;
		box-sizing: border-box;
		display: flex;
		align-items: center;
		gap: 37px;
	}

	.legend span {
		display: flex;
		align-items: center;
		gap: 6px;
	}

	.legend i {
		width: 16px;
		height: 16px;
	}

	.trapped-key {
		background: #5bb946;
	}

	.profit-key {
		background: #e84a4a;
	}

	.stat {
		display: flex;
		justify-content: space-between;
		align-items: center;
		height: 40.5px;
		padding: 0 1px;
	}

	.stat span {
		letter-spacing: 0.8px;
	}

	.stat b {
		font-weight: 400;
		color: #333;
	}

	.stat .range {
		letter-spacing: 1px;
	}

	.explain {
		color: #999;
		height: 59px;
	}

	.explain span {
		display: flex;
		align-items: center;
	}

	.explain .date {
		letter-spacing: 1.8px;
		margin-right: -1px;
	}

	.explain i {
		width: 31px;
		height: 31px;
		margin-left: 6px;
		border-radius: 50%;
		background: #ccc;
		color: #fff;
		font: 700 22px/31px Roboto, sans-serif;
		text-align: center;
	}

	/* --- BANNER --- */
	.banner {
		height: 77px;
		margin: 0 15px;
		padding: 0 32px 0 25px;
		border-radius: 39px;
		background: #fdeee6;
		color: #d9570f;
		font-size: 33px;
		display: flex;
		align-items: center;
	}

	.banner p {
		margin: -4px 0 0 46px;
		flex: 1;
	}

	.banner svg {
		fill: #ea5504;
	}

	.divider {
		width: 1px;
		height: 31px;
		background: #e08a50;
		margin-right: 14px;
	}

	.banner .close {
		stroke: #d9570f;
		stroke-width: 2.5;
	}

	/* --- SECTION TABS --- */
	.sections {
		margin-top: 13px;
		height: 90px;
		border-top: 2px solid #dcdcdc;
		border-bottom: 2px solid #dcdcdc;
		display: flex;
		padding-left: 34px;
		font-size: 37px;
		color: #666;
	}

	.sections span {
		width: 144.7px;
		height: 86px;
		line-height: 86px;
		text-align: center;
		position: relative;
	}

	.cards {
		height: 33px;
		padding: 10px 32px 0;
		display: flex;
		gap: 18px;
		overflow: hidden;
	}

	.card {
		width: 458px;
		height: 60px;
		border-radius: 24px;
		background: linear-gradient(90deg, #fff5f3 58%, #fef0ee 58%);
	}

	/* --- BOTTOM BAR --- */
	.bottom {
		flex: 1;
		border-top: 2px solid #d4d6d8;
		background: #f7f8fa;
		display: flex;
		font-size: 30px;
		color: #666;
	}

	.index {
		width: 234px;
		display: flex;
		flex-direction: column;
		align-items: center;
	}

	.up-caret {
		border: 8px solid transparent;
		border-top: 0;
		border-bottom: 6px solid #777;
		margin: 8px 0 0 0;
	}

	.index .points {
		color: #148f14;
		font-size: 33.5px;
		line-height: 52px;
	}

	.index div {
		display: flex;
		align-self: stretch;
		justify-content: space-between;
		padding: 0 1px 0 35px;
		line-height: 33px;
	}

	.index .rate {
		color: #148f14;
		letter-spacing: 0.5px;
	}

	.action {
		width: 211.5px;
		display: flex;
		flex-direction: column;
		align-items: center;
	}

	.action svg {
		margin-top: 8px;
		fill: none;
		stroke: #666;
		stroke-width: 2.5;
	}

	.action span {
		line-height: 59px;
	}
</style>
